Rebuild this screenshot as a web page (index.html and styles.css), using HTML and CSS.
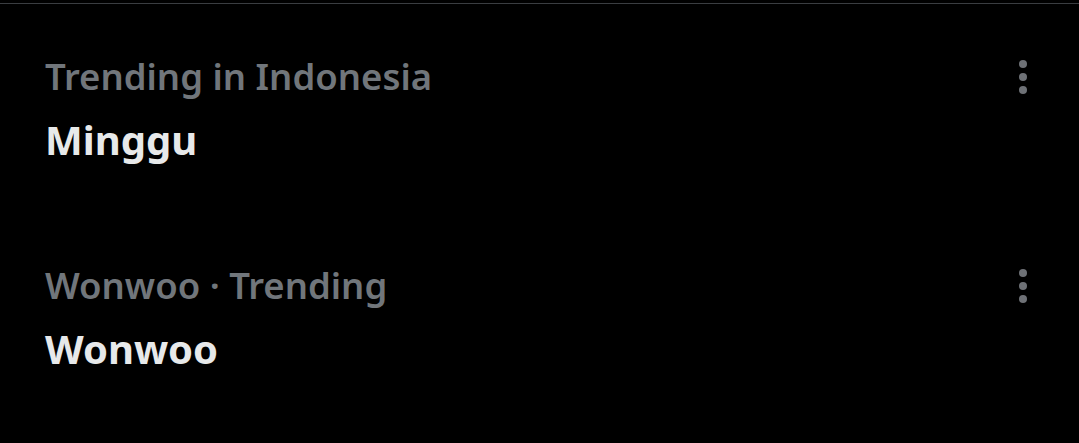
FILE: index.html
```html
<!DOCTYPE html>
<html>
<head>
<meta charset="utf-8">
<link rel="stylesheet" href="styles.css">
</head>
<body>
<div class="page">
  <div class="divider"></div>
  <div class="trend">
    <div class="trend-text">
      <div class="meta">Trending in Indonesia</div>
      <div class="title">Minggu</div>
    </div>
    <div class="more">
      <svg width="10" height="36" viewBox="0 0 10 36"><circle cx="5" cy="5" r="4"/><circle cx="5" cy="18" r="4"/><circle cx="5" cy="31" r="4"/></svg>
    </div>
  </div>
  <div class="trend">
    <div class="trend-text">
      <div class="meta">Wonwoo · Trending</div>
      <div class="title">Wonwoo</div>
    </div>
    <div class="more">
      <svg width="10" height="36" viewBox="0 0 10 36"><circle cx="5" cy="5" r="4"/><circle cx="5" cy="18" r="4"/><circle cx="5" cy="31" r="4"/></svg>
    </div>
  </div>
</div>
</body>
</html>
```

FILE: styles.css
```css
html, body {
  margin: 0;
  padding: 0;
  background: #000;
}
.page {
  width: 1079px;
  height: 443px;
  overflow: hidden;
  background: #000;
  font-family: "Noto Sans", "Open Sans", sans-serif;
  padding-top: 3px;
  box-sizing: border-box;
}
.divider {
  height: 1px;
  background: #3a3d41;
}
.trend {
  display: flex;
  justify-content: space-between;
  align-items: flex-start;
  box-sizing: border-box;
  padding: 48px 51px 0 45px;
  height: 209px;
}
.trend-text {
  display: flex;
  flex-direction: column;
}
.meta {
  color: #71767b;
  font-size: 36.5px;
  font-weight: 600;
  line-height: 48px;
}
.title {
  color: #e7e9ea;
  font-size: 40px;
  font-weight: 700;
  line-height: 56px;
  margin-top: 12px;
}
.more {
  display: flex;
  padding-top: 7px;
}
.more svg {
  fill: #6e7176;
}
```
